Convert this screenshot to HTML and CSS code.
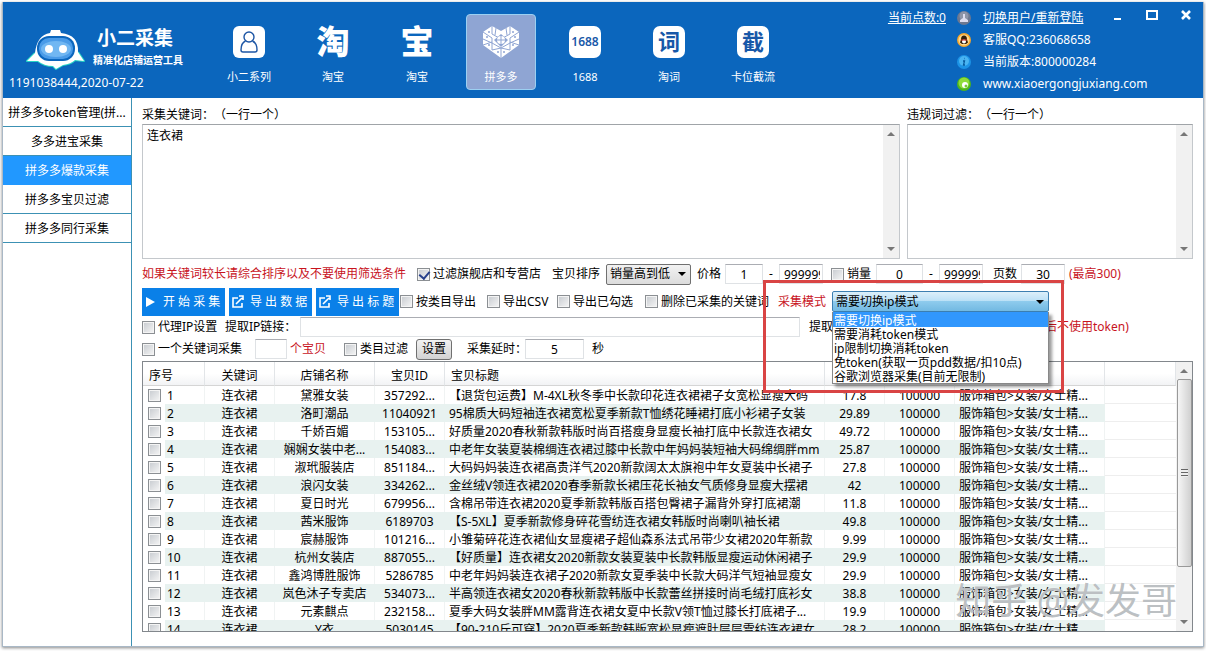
FILE: index.html
```html
<!DOCTYPE html>
<html lang="zh-CN">
<head>
<meta charset="utf-8">
<title>小二采集</title>
<link rel="stylesheet" href="styles.css">
</head>
<body>
<div class="window">
<header class="header">
  <div class="brand">
    <div class="brand-row">
      <svg class="robot" width="62" height="42" viewBox="0 0 62 42">
        <g fill="none" stroke="#27d3c4" stroke-width="2" stroke-linejoin="round"><path d="M10 25 2 33l11 0q6 5 15 5l3 3 7-4q8-1 12-5l9 1-6-9"/></g>
        <path fill="#fff" d="M10 25 2 33l11 0q6 5 15 5l3 3 7-4q8-1 12-5l9 1-6-9q1-17-17-19l-1-3h-9l-1 3Q12 7 10 25Z"/>
        <rect x="12" y="8" width="38" height="25" rx="12" fill="#0b66bd"/>
        <rect x="14" y="10" width="34" height="21" rx="10" fill="#4a9be8"/>
        <ellipse cx="31" cy="21" rx="15" ry="8" fill="#8ccaf8" opacity=".6"/>
        <circle cx="24" cy="21" r="4" fill="#fff"/><circle cx="38" cy="21" r="4" fill="#fff"/>
      </svg>
      <div class="brand-text"><strong class="brand-name">小二采集</strong><span class="brand-sub">精准化店铺运营工具</span></div>
    </div>
    <div class="account">1191038444,2020-07-22</div>
  </div>
  <nav class="nav">
    <button class="nav-item"><svg width="32" height="32" viewBox="0 0 32 32"><rect width="32" height="32" rx="6" fill="#fff"/><g fill="none" stroke="#1d56a5" stroke-width="1.4"><circle cx="16" cy="11" r="5"/><path d="M12.500 15Q8 17 8 24q0 2 2 2h12q2 0 2-2 0-7-4.500-9"/></g></svg><span>小二系列</span></button>
    <button class="nav-item"><span class="glyph">淘</span><span>淘宝</span></button>
    <button class="nav-item"><span class="glyph">宝</span><span>淘宝</span></button>
    <button class="nav-item nav-active"><svg width="38" height="32" viewBox="0 0 38 32"><path fill="#fff" d="M10 0 19 5l9-5 9 6v13L19 32 1 19V6Z"/><g stroke="#8fa5d3" stroke-width="1" fill="none"><path d="M10 0v8l9 5 9-5V0M1 6l9 6v12M37 6l-9 6v12M1 13l9 4 9 5 9-5 9-4M1 19l9-3M37 19l-9-3M19 22v10M10 24l9-2 9 2M14 2l-1 7M24 2l1 7"/></g><g fill="#8fa5d3"><path d="m19 8 7 6-7 7-7-7Z"/><circle cx="7" cy="6" r="1"/><circle cx="31" cy="6" r="1"/><circle cx="5" cy="11" r="1"/><circle cx="33" cy="11" r="1"/><circle cx="7" cy="19" r="1"/><circle cx="31" cy="19" r="1"/><circle cx="16" cy="26" r="1"/><circle cx="22" cy="26" r="1"/></g><circle cx="19" cy="14" r="4" fill="#fff"/><path d="M19 10v8M15 14h8" stroke="#8fa5d3"/></svg><span>拼多多</span></button>
    <button class="nav-item"><span class="tile tile-num">1688</span><span>1688</span></button>
    <button class="nav-item"><span class="tile">词</span><span>淘词</span></button>
    <button class="nav-item"><span class="tile">截</span><span>卡位截流</span></button>
  </nav>
  <a class="points" href="#">当前点数:0</a>
  <ul class="info">
    <li><svg width="14" height="14" viewBox="0 0 14 14"><circle cx="7" cy="7" r="7" fill="#6d7890"/><circle cx="7" cy="5" r="4.500" fill="#8d95a8"/><path d="M6 3h2v4l3 2v2H3V9l3-2Z" fill="#dde"/></svg><a href="#">切换用户/重新登陆</a></li>
    <li><svg width="14" height="14" viewBox="0 0 14 14"><circle cx="7" cy="7" r="7" fill="#f6a62c"/><circle cx="7" cy="7" r="5.500" fill="#ffd98a"/><path d="M7 2.500q3 0 3 4l1 3-2 1.500H5L3 9.500l1-3q0-4 3-4Z" fill="#33200c"/><ellipse cx="7" cy="8.500" rx="2" ry="2" fill="#fff"/><path d="M4 6.500h6v1H4Z" fill="#d32"/></svg><span>客服QQ:236068658</span></li>
    <li><svg width="14" height="14" viewBox="0 0 14 14"><circle cx="7" cy="7" r="7" fill="#1c93e6"/><circle cx="7" cy="6" r="5" fill="#49b4f2"/><path d="M7.500 3.500h.5M6 6h1.500L6.500 10H8" stroke="#075a9e" stroke-width="1.300" fill="none"/></svg><span>当前版本:800000284</span></li>
    <li><svg width="14" height="14" viewBox="0 0 14 14"><circle cx="7" cy="7" r="7" fill="#4db51c"/><circle cx="7" cy="6" r="5.500" fill="#8fdc3a"/><circle cx="8" cy="8" r="3" fill="#fff"/><circle cx="9" cy="9" r="1.500" fill="#79c932"/></svg><span>www.xiaoergongjuxiang.com</span></li>
  </ul>
  <div class="win-buttons">
    <button aria-label="最小化"><svg width="12" height="12"><path d="M2 10h7" stroke="#fff" stroke-width="2"/></svg></button>
    <button aria-label="最大化"><svg width="12" height="12"><path d="M1 2h10v8H1Z" fill="none" stroke="#fff" stroke-width="2"/></svg></button>
    <button aria-label="关闭"><svg width="12" height="12"><path d="m2 2 8 8M10 2l-8 8" stroke="#fff" stroke-width="2.600"/></svg></button>
  </div>
</header>
<div class="body">
<nav class="sidebar">
  <a href="#">拼多多token管理(拼...</a>
  <a href="#">多多进宝采集</a>
  <a href="#" class="current">拼多多爆款采集</a>
  <a href="#">拼多多宝贝过滤</a>
  <a href="#">拼多多同行采集</a>
</nav>
<main class="main">
  <section class="texts">
    <div class="text-col">
      <label for="kw">采集关键词：（一行一个）</label>
      <div class="area"><textarea id="kw">连衣裙</textarea><div class="bar"><i class="up"></i><i class="down"></i></div></div>
    </div>
    <div class="text-col">
      <label for="ban">违规词过滤：（一行一个）</label>
      <div class="area"><textarea id="ban"></textarea><div class="bar"><i class="up"></i><i class="down"></i></div></div>
    </div>
  </section>
  <form class="tools">
    <div class="row row-filter">
      <span class="red w-hint">如果关键词较长请综合排序以及不要使用筛选条件</span>
      <label class="check w-flag"><input type="checkbox" checked>过滤旗舰店和专营店</label>
      <label class="w-sortlabel" for="sort">宝贝排序</label>
      <select id="sort" class="select sort"><option>销量高到低</option></select>
      <label class="w-price" for="p1">价格</label>
      <input class="num n-small" id="p1" value="1"><span class="dash">-</span><input class="num n-big n-clip" aria-label="最高价格" value="999999">
      <label class="check w-sales"><input type="checkbox">销量</label>
      <input class="num n-mid" aria-label="最低销量" value="0"><span class="dash">-</span><input class="num n-big n-clip" aria-label="最高销量" value="999999">
      <label class="w-pages" for="pages">页数</label>
      <input class="num n-big" id="pages" value="30"><span class="red w-max">(最高300)</span>
    </div>
    <div class="row row-actions">
      <div class="actions">
        <button type="button" class="action"><svg width="12" height="14" viewBox="0 0 12 14"><path d="M1 2l9 5-9 5Z" fill="#fff"/></svg>开 始 采 集</button>
        <button type="button" class="action"><svg width="12" height="14" viewBox="0 0 12 14"><path d="M6 3H1v9h9V8M4 9l6-6M7 1h4v4" fill="none" stroke="#fff" stroke-width="1.600"/></svg>导 出 数 据</button>
        <button type="button" class="action"><svg width="12" height="14" viewBox="0 0 12 14"><path d="M6 3H1v9h9V8M4 9l6-6M7 1h4v4" fill="none" stroke="#fff" stroke-width="1.600"/></svg>导 出 标 题</button>
      </div>
      <label class="check w-cat"><input type="checkbox">按类目导出</label>
      <label class="check w-csv"><input type="checkbox">导出CSV</label>
      <label class="check w-picked"><input type="checkbox">导出已勾选</label>
      <label class="check w-del"><input type="checkbox">删除已采集的关键词</label>
      <label class="red w-mode" for="mode">采集模式</label>
      <div class="combo">
        <select id="mode" class="select mode"><option>需要切换ip模式</option><option>需要消耗token模式</option><option>ip限制切换消耗token</option></select>
        <ul class="menu" role="listbox" aria-label="采集模式">
          <li role="option" aria-selected="true">需要切换ip模式</li>
          <li role="option">需要消耗token模式</li>
          <li role="option">ip限制切换消耗token</li>
          <li role="option">免token(获取一页pdd数据/扣10点)</li>
          <li role="option">谷歌浏览器采集(目前无限制)</li>
        </ul>
        <div class="highlight"></div>
      </div>
    </div>
    <div class="row">
      <label class="check w-proxy"><input type="checkbox">代理IP设置</label>
      <label class="w-link" for="link">提取IP链接：</label>
      <input class="num n-link" id="link">
      <span class="w-fetch">提取</span>
      <span class="red">后不使用token)</span>
    </div>
    <div class="row">
      <label class="check w-one"><input type="checkbox">一个关键词采集</label>
      <input class="num n-tiny" id="cnt"><label class="red w-items" for="cnt">个宝贝</label>
      <label class="check w-catf"><input type="checkbox">类目过滤</label>
      <button type="button" class="set">设置</button>
      <label class="w-delay" for="delay">采集延时：</label>
      <input class="num n-delay" id="delay" value="5"><span class="w-sec">秒</span>
    </div>
  </form>
  <section class="grid">
    <div class="grid-view">
    <table>
      <colgroup><col class="c1"><col class="c2"><col class="c3"><col class="c2"><col class="c4"><col class="c5"><col class="c2"><col class="c6"><col></colgroup>
      <thead><tr><th class="left">序号</th><th>关键词</th><th>店铺名称</th><th>宝贝ID</th><th class="left">宝贝标题</th><th></th><th></th><th></th><th></th></tr></thead>
      <tbody>
      <tr><td><label class="pick"><input type="checkbox">1</label></td><td>连衣裙</td><td>黛雅女装</td><td>357292...</td><td>【退货包运费】M-4XL秋冬季中长款印花连衣裙裙子女宽松显瘦大码</td><td>17.8</td><td>100000</td><td>服饰箱包&gt;女装/女士精...</td><td></td></tr>
      <tr><td><label class="pick"><input type="checkbox">2</label></td><td>连衣裙</td><td>洛町潮品</td><td>11040921</td><td>95棉质大码短袖连衣裙宽松夏季新款T恤绣花睡裙打底小衫裙子女装</td><td>29.89</td><td>100000</td><td>服饰箱包&gt;女装/女士精...</td><td></td></tr>
      <tr><td><label class="pick"><input type="checkbox">3</label></td><td>连衣裙</td><td>千娇百媚</td><td>153105...</td><td>好质量2020春秋新款韩版时尚百搭瘦身显瘦长袖打底中长款连衣裙女</td><td>49.72</td><td>100000</td><td>服饰箱包&gt;女装/女士精...</td><td></td></tr>
      <tr><td><label class="pick"><input type="checkbox">4</label></td><td>连衣裙</td><td>娴娴女装中老...</td><td>154083...</td><td>中老年女装夏装棉绸连衣裙过膝中长款中年妈妈装短袖大码绵绸胖mm</td><td>25.87</td><td>100000</td><td>服饰箱包&gt;女装/女士精...</td><td></td></tr>
      <tr><td><label class="pick"><input type="checkbox">5</label></td><td>连衣裙</td><td>淑玳服装店</td><td>851184...</td><td>大码妈妈装连衣裙高贵洋气2020新款阔太太旗袍中年女夏装中长裙子</td><td>27.8</td><td>100000</td><td>服饰箱包&gt;女装/女士精...</td><td></td></tr>
      <tr><td><label class="pick"><input type="checkbox">6</label></td><td>连衣裙</td><td>浪闪女装</td><td>334262...</td><td>金丝绒V领连衣裙2020春季新款长裙压花长袖女气质修身显瘦大摆裙</td><td>42</td><td>100000</td><td>服饰箱包&gt;女装/女士精...</td><td></td></tr>
      <tr><td><label class="pick"><input type="checkbox">7</label></td><td>连衣裙</td><td>夏日时光</td><td>679956...</td><td>含棉吊带连衣裙2020夏季新款韩版百搭包臀裙子漏背外穿打底裙潮</td><td>11.8</td><td>100000</td><td>服饰箱包&gt;女装/女士精...</td><td></td></tr>
      <tr><td><label class="pick"><input type="checkbox">8</label></td><td>连衣裙</td><td>茜米服饰</td><td>6189703</td><td>【S-5XL】夏季新款修身碎花雪纺连衣裙女韩版时尚喇叭袖长裙</td><td>49.8</td><td>100000</td><td>服饰箱包&gt;女装/女士精...</td><td></td></tr>
      <tr><td><label class="pick"><input type="checkbox">9</label></td><td>连衣裙</td><td>宸赫服饰</td><td>101216...</td><td>小雏菊碎花连衣裙仙女显瘦裙子超仙森系法式吊带少女裙2020年新款</td><td>9.99</td><td>100000</td><td>服饰箱包&gt;女装/女士精...</td><td></td></tr>
      <tr><td><label class="pick"><input type="checkbox">10</label></td><td>连衣裙</td><td>杭州女装店</td><td>887055...</td><td>【好质量】连衣裙女2020新款女装夏装中长款韩版显瘦运动休闲裙子</td><td>29.9</td><td>100000</td><td>服饰箱包&gt;女装/女士精...</td><td></td></tr>
      <tr><td><label class="pick"><input type="checkbox">11</label></td><td>连衣裙</td><td>鑫鸿博胜服饰</td><td>5286785</td><td>中老年妈妈装连衣裙子2020新款女夏季装中长款大码洋气短袖显瘦女</td><td>29.9</td><td>100000</td><td>服饰箱包&gt;女装/女士精...</td><td></td></tr>
      <tr><td><label class="pick"><input type="checkbox">12</label></td><td>连衣裙</td><td>岚色沐子专卖店</td><td>534073...</td><td>半高领连衣裙女2020春秋新款韩版中长款蕾丝拼接时尚毛绒打底衫女</td><td>38.8</td><td>100000</td><td>服饰箱包&gt;女装/女士精...</td><td></td></tr>
      <tr><td><label class="pick"><input type="checkbox">13</label></td><td>连衣裙</td><td>元素麒点</td><td>232158...</td><td>夏季大码女装胖MM露背连衣裙女夏中长款V领T恤过膝长打底裙子...</td><td>19.9</td><td>100000</td><td>服饰箱包&gt;女装/女士精...</td><td></td></tr>
      <tr><td><label class="pick"><input type="checkbox">14</label></td><td>连衣裙</td><td>Y衣</td><td>5030145</td><td>【90-210斤可穿】2020夏季新款韩版宽松显瘦遮肚层层雪纺连衣裙女</td><td>28.2</td><td>100000</td><td>服饰箱包&gt;女装/女士精...</td><td></td></tr>
      </tbody>
    </table>
    </div>
    <div class="bar grid-bar"><i class="up"></i><div class="thumb"></div><i class="down"></i></div>
    <div class="watermark">知乎 @发发哥</div>
  </section>
</main>
</div>
</div>
</body>
</html>
```
FILE: styles.css
```css
* { box-sizing: border-box; }
body {
  margin: 0;
  background: #fff;
  color: #000;
  font: 12px/18px "Noto Sans", "Noto Sans CJK SC", sans-serif;
  text-spacing-trim: space-all;
}
button, input, select, textarea { font: inherit; color: inherit; margin: 0; }
ul { list-style: none; margin: 0; padding: 0; }
label, span, a { white-space: nowrap; }
.window {
  display: flex;
  flex-direction: column;
  height: calc(100vh - 6px);
  margin: 2px 2px 4px 2px;
  border: 1px solid #a9b8c6;
  border-top: 0;
  box-shadow: 0 1px 3px #888;
}

/* header */
.header {
  display: flex;
  flex: none;
  height: 96px;
  background: #0b66bd;
  color: #fff;
}
.brand { width: 211px; padding: 22px 0 0 6px; }
.brand-row { display: flex; padding-left: 16px; gap: 6px; height: 48px; }
.robot { margin-top: 4px; }
.brand-text { display: flex; flex-direction: column; }
.brand-name { padding-left: 4px; font-size: 19px; line-height: 28px; }
.brand-sub { font-size: 10px; line-height: 16px; font-weight: 700; }
.account { font-size: 12px; line-height: 22px; }
.nav { display: flex; gap: 14px; padding-top: 12px; }
.nav-item {
  display: flex;
  flex-direction: column;
  align-items: center;
  gap: 10px;
  width: 70px;
  height: 76px;
  padding: 11px 0 0;
  border: 1px solid transparent;
  border-radius: 4px;
  background: none;
  color: #fff;
  font-size: 11px;
}
.nav-active { background: #8fa5d3; border-color: #9cd0f2; }
.glyph { height: 32px; font-size: 33px; line-height: 32px; font-weight: 900; }
.tile {
  width: 32px;
  height: 32px;
  border-radius: 7px;
  background: #fff;
  color: #1858a8;
  font-size: 22px;
  line-height: 31px;
  font-weight: 700;
}
.tile-num { font-size: 12px; font-weight: 600; }
.points { margin: 7px 0 0 auto; color: #fff; }
.info { margin: 5px 0 0 11px; width: 186px; }
.info li { display: flex; align-items: center; gap: 12px; height: 22px; }
.info a { color: #fff; }
.info svg { flex: none; }
.win-buttons { display: flex; gap: 22px; padding: 7px 11px 0 0; margin-left: -31px; height: 24px; }
.win-buttons button { width: 12px; height: 12px; padding: 0; border: 0; background: none; display: block; }
.win-buttons svg { display: block; }

/* layout */
.body { display: flex; flex: 1; min-height: 0; }
.sidebar { width: 129px; flex: none; border-right: 1px solid #3c91b4; }
.sidebar a {
  display: block;
  height: 29px;
  line-height: 30px;
  text-align: center;
  border-bottom: 1px solid #3c91b4;
  color: #000;
  text-decoration: none;
}
.sidebar .current { background: #2198ff; border-color: #2198ff; color: #fff; }
.main {
  display: flex;
  flex-direction: column;
  flex: 1;
  min-width: 0;
  padding: 0 10px 14px 10px;
}

/* keyword areas */
.texts { display: grid; grid-template-columns: 1fr 286px; gap: 7px; }
.text-col label { display: block; height: 26px; line-height: 33px; }
.area { display: flex; height: 135px; border: 1px solid #c4c8cc; border-top-color: #a0a4a8; }
.area textarea { flex: 1; min-width: 0; padding: 2px 4px; border: 0; resize: none; outline: 0; background: none; overflow: hidden; }
.bar {
  display: flex;
  flex-direction: column;
  justify-content: space-between;
  align-items: center;
  width: 16px;
  padding: 7px 0;
  background: #f1f1f1;
}
.up, .down { border: 4px solid transparent; flex: none; }
.up { border-top: 0; border-bottom-color: #777; }
.down { border-bottom: 0; border-top-color: #777; }

/* tools */
.tools { padding-top: 2px; }
.row { display: flex; align-items: center; height: 22px; }
.row > * { flex: none; }
.row-filter { height: 26px; }
.row-actions { height: 29px; }
.red { color: #c8141e; }
.check { display: flex; align-items: center; gap: 3px; }
input[type="checkbox"] {
  appearance: none;
  display: grid;
  flex: none;
  width: 13px;
  height: 13px;
  border: 1px solid #8b8f93;
  background: linear-gradient(135deg, #c6cacf, #f6f6f6);
  box-shadow: inset 0 0 0 1px #f4f4f4;
}
input[type="checkbox"]:checked::after {
  content: "";
  width: 5px;
  height: 8px;
  margin-left: 3px;
  border: solid #27408b;
  border-width: 0 2px 2px 0;
  transform: rotate(40deg);
}
.num {
  height: 20px;
  padding: 0 4px;
  border: 1px solid #dfe2e5;
  border-top-color: #abadb3;
  background: #fff;
  text-align: center;
}
.n-clip { padding-right: 2px; }
.dash { width: 16px; text-align: center; }
.w-hint { width: 275px; }
.w-flag { width: 135px; }
.w-sortlabel { width: 54px; }
.w-price { width: 28px; margin-left: 6px; }
.n-small { width: 38px; }
.n-mid { width: 47px; }
.n-big { width: 44px; }
.w-sales { width: 45px; margin-left: 8px; }
.w-pages { width: 28px; margin-left: 10px; }
.w-max { margin-left: 4px; }
.select {
  appearance: none;
  height: 21px;
  padding: 0 3px;
  border: 1px solid #707070;
  border-radius: 2px;
}
.sort {
  width: 85px;
  background: url("data:image/svg+xml,%3Csvg xmlns='http://www.w3.org/2000/svg' width='8' height='4'%3E%3Cpath d='M0 0h8L4 4Z'/%3E%3C/svg%3E") right 4px center no-repeat, linear-gradient(#f2f2f2, #dcdcdc);
}
.mode {
  display: block;
  width: 100%;
  border-color: #3c7fb1;
  background: url("data:image/svg+xml,%3Csvg xmlns='http://www.w3.org/2000/svg' width='8' height='4'%3E%3Cpath d='M0 0h8L4 4Z'/%3E%3C/svg%3E") right 4px center no-repeat, linear-gradient(#dceffa, #b9e0f6 50%, #8ecbed 50%, #72b9e2);
}
.actions { display: flex; gap: 4px; width: 258px; }
.action {
  display: flex;
  align-items: center;
  gap: 6px;
  width: 83px;
  height: 28px;
  padding: 0 0 0 3px;
  border: 0;
  background: #0a80e8;
  color: #fff;
  white-space: nowrap;
}
.w-cat { width: 87px; }
.w-csv { width: 70px; }
.w-picked { width: 88px; }
.w-del { width: 133px; }
.w-mode { width: 54px; }
.combo { position: relative; width: 217px; }
.menu {
  position: absolute;
  z-index: 2;
  top: 100%;
  left: 0;
  width: 100%;
  border: 1px solid #888;
  border-top: 0;
  background: #fff;
  box-shadow: 3px 3px 3px #0006;
}
.menu li { height: 14px; line-height: 15px; padding-left: 1px; white-space: nowrap; }
.menu [aria-selected="true"] { height: 15px; line-height: 17px; background: #3197fd; color: #fff; }
.highlight {
  position: absolute;
  z-index: 3;
  top: -11px;
  left: -69px;
  width: 301px;
  height: 113px;
  border: 3px solid #d94444;
  pointer-events: none;
}
.w-proxy { width: 83px; }
.w-link { width: 75px; }
.n-link { width: 500px; }
.w-fetch { width: 236px; margin-left: 9px; }
.w-one { width: 113px; }
.n-tiny { width: 32px; }
.w-items { width: 54px; margin-left: 3px; }
.w-catf { width: 72px; }
.set { width: 36px; height: 21px; padding: 0; border: 1px solid #707070; border-radius: 3px; background: linear-gradient(#f2f2f2, #d2d2d2); }
.w-delay { width: 58px; margin-left: 15px; }
.n-delay { width: 59px; }
.w-sec { margin-left: 8px; }

/* result table */
.grid { position: relative; display: flex; flex: 1; min-height: 0; margin-top: 1px; border: 1px solid #82878c; }
.grid-view { flex: 1; min-width: 0; overflow: hidden; }
table { width: 100%; table-layout: fixed; border-collapse: separate; border-spacing: 0; }
.c1 { width: 62px; }
.c2 { width: 70px; }
.c3 { width: 100px; }
.c4 { width: 380px; }
.c5 { width: 60px; }
.c6 { width: 150px; }
th {
  height: 24px;
  padding: 4px 0 0;
  font-weight: 400;
  border-right: 1px solid #e2e5e8;
  border-bottom: 1px solid #d5d5d5;
  background: linear-gradient(#fff 50%, #f2f3f5);
}
th.left { text-align: left; padding-left: 6px; }
td {
  height: 18px;
  padding: 1px 0 0;
  line-height: 17px;
  text-align: center;
  white-space: nowrap;
  overflow: hidden;
  border-right: 1px solid #f0f3f3;
}
td:nth-child(5), td:nth-child(8) { text-align: left; padding-left: 4px; }
tr:nth-child(even) td { background: #e8f2f0; border-color: #e8f2f0; }
tr:nth-child(even) td:first-child { background: linear-gradient(90deg, #fff 22px, #e8f2f0 22px); }
tbody tr td:last-child, tbody tr:nth-child(even) td:last-child { background: #fff; border-right: 0; border-bottom: 1px solid #eee; }
.pick { display: flex; align-items: center; gap: 6px; padding-left: 5px; }
.grid-bar { justify-content: flex-start; gap: 6px; }
.thumb {
  width: 15px;
  flex: 0 1 188px;
  border: 1px solid #999;
  border-radius: 2px;
  background: repeating-linear-gradient(#666 0 1px, #eee 1px 3px) center / 7px 8px no-repeat, linear-gradient(90deg, #f6f6f6, #d0d0d0);
}
.grid-bar .down { margin-top: auto; }
.watermark {
  position: absolute;
  right: 15px;
  bottom: 8px;
  font-size: 36px;
  line-height: 44px;
  color: #9a9fa4aa;
  text-shadow: 0 0 1px #fff;
}
```
